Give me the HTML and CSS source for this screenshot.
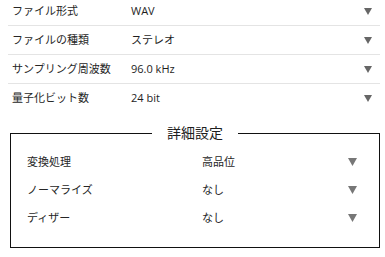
FILE: index.html
```html
<!DOCTYPE html>
<html lang="ja">
<head>
<meta charset="utf-8">
<link rel="stylesheet" href="styles.css">
</head>
<body>
<div class="list">
  <div class="row"><span class="label">ファイル形式</span><span class="value">WAV</span><svg class="arrow" viewBox="0 0 8 7"><path d="M0 0H8L4 7Z"/></svg></div>
  <div class="row"><span class="label">ファイルの種類</span><span class="value">ステレオ</span><svg class="arrow" viewBox="0 0 8 7"><path d="M0 0H8L4 7Z"/></svg></div>
  <div class="row"><span class="label">サンプリング周波数</span><span class="value">96.0 kHz</span><svg class="arrow" viewBox="0 0 8 7"><path d="M0 0H8L4 7Z"/></svg></div>
  <div class="row"><span class="label">量子化ビット数</span><span class="value">24 bit</span><svg class="arrow" viewBox="0 0 8 7"><path d="M0 0H8L4 7Z"/></svg></div>
</div>
<fieldset class="detail">
  <legend class="detail-title">詳細設定</legend>
  <div class="detail-body">
    <div class="drow"><span class="label">変換処理</span><span class="value">高品位</span><svg class="arrow2" viewBox="0 0 9 8"><path d="M0 0H9L4.5 8Z"/></svg></div>
    <div class="drow"><span class="label">ノーマライズ</span><span class="value">なし</span><svg class="arrow2" viewBox="0 0 9 8"><path d="M0 0H9L4.5 8Z"/></svg></div>
    <div class="drow"><span class="label">ディザー</span><span class="value">なし</span><svg class="arrow2" viewBox="0 0 9 8"><path d="M0 0H9L4.5 8Z"/></svg></div>
  </div>
</fieldset>
</body>
</html>
```

FILE: styles.css
```css
html, body {
  margin: 0;
  padding: 0;
  background: #fff;
}
body {
  font-family: "Open Sans", "Noto Sans CJK JP", sans-serif;
  font-size: 11px;
  line-height: 16px;
  color: #1e1e1e;
  width: 385px;
  height: 257px;
  overflow: hidden;
}
.list {
  margin: -3px 5px 0 8px;
}
.row {
  display: grid;
  grid-template-columns: 119px 1fr 8px;
  align-items: center;
  height: 28px;
  padding: 0 8px 0 4px;
  border-bottom: 1px solid #e4e4e4;
}
.row:last-child {
  border-bottom: none;
}
.label {
  color: #262626;
}
.arrow {
  width: 8px;
  height: 7px;
  fill: #666;
  display: block;
}
.detail {
  margin: 13px 5px 0 10px;
  padding: 0;
  border: 1px solid #111;
  min-width: 0;
}
.detail-title {
  margin-left: 141px;
  padding: 0 15px;
  font-size: 14px;
  line-height: 16px;
  color: #1e1e1e;
}
.detail-body {
  padding: 7px 22px 15px 16px;
}
.drow {
  display: grid;
  grid-template-columns: 175px 1fr 9px;
  align-items: center;
  height: 28px;
}
.arrow2 {
  width: 9px;
  height: 8px;
  fill: #777;
  display: block;
}
```
